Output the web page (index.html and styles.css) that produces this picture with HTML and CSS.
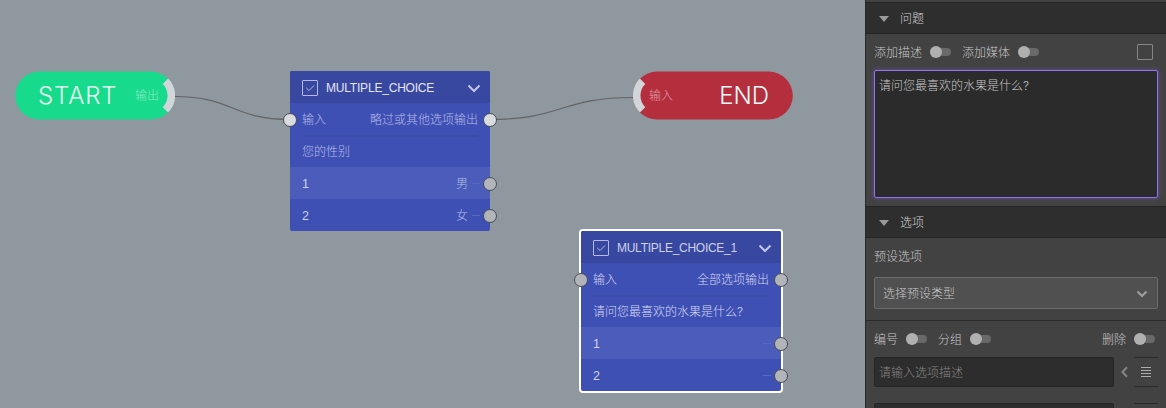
FILE: index.html
```html
<!DOCTYPE html>
<html lang="zh-CN">
<head>
<meta charset="utf-8">
<title>Flow editor</title>
<link rel="stylesheet" href="styles.css">
</head>
<body>
<div class="app">
  <main class="canvas">
    <svg class="wires" width="865" height="408" fill="none" stroke="#626464" stroke-width="1.2">
      <path d="M175 96.5C233 96.5 232 119.5 290 119.5"/>
      <path d="M490 119.5C562 119.5 561 97.5 633 97.5"/>
    </svg>

    <div class="terminal start">
      <svg class="shape" width="160" height="49"><rect x=".2" y=".6" width="159.8" height="48" rx="24" fill="#18da8c"/><path d="M150.4 10.2A20.2 20.2 0 0 1 150.4 38.8" transform="translate(0 .1)" fill="none" stroke="#d2d5da" stroke-width="7.6"/></svg>
      <span class="name">START</span><span class="io">输出</span>
    </div>
    <div class="terminal end">
      <svg class="shape" width="160" height="49"><rect y=".6" width="159.8" height="48" rx="24" fill="#b52e3e"/><path d="M9.6 10.2A20.2 20.2 0 0 0 9.6 38.8" transform="translate(0 .1)" fill="none" stroke="#d2d5da" stroke-width="7.6"/></svg>
      <span class="io">输入</span><span class="name">END</span>
    </div>

    <section class="node first">
      <header class="node-head">
        <svg width="16" height="16" fill="none" stroke="#b4b9de"><rect x=".5" y=".5" width="15" height="15" rx=".5"/><path d="M4.2 7.8l2.8 2.8 5-5.1"/></svg>
        <span class="node-title">MULTIPLE_CHOICE</span>
        <svg class="chev" width="14" height="10" fill="none" stroke="#c3c7e5" stroke-width="2"><path d="M1.5 2.5L7 8 12.5 2.5"/></svg>
      </header>
      <div class="node-row ports"><span>输入</span><span>略过或其他选项输出</span><i class="port in linked"></i><i class="port linked"></i></div>
      <div class="node-row question"><span>您的性别</span></div>
      <div class="node-row option"><b>1</b><span class="value">男</span><i class="dash"></i><i class="port"></i></div>
      <div class="node-row"><b>2</b><span class="value">女</span><i class="dash"></i><i class="port"></i></div>
    </section>

    <section class="node second">
      <header class="node-head">
        <svg width="16" height="16" fill="none" stroke="#b4b9de"><rect x=".5" y=".5" width="15" height="15" rx=".5"/><path d="M4.2 7.8l2.8 2.8 5-5.1"/></svg>
        <span class="node-title">MULTIPLE_CHOICE_1</span>
        <svg class="chev" width="14" height="10" fill="none" stroke="#c3c7e5" stroke-width="2"><path d="M1.5 2.5L7 8 12.5 2.5"/></svg>
      </header>
      <div class="node-row ports"><span>输入</span><span>全部选项输出</span><i class="port in"></i><i class="port"></i></div>
      <div class="node-row question"><span>请问您最喜欢的水果是什么<em>?</em></span></div>
      <div class="node-row option"><b>1</b><i class="dash"></i><i class="port"></i></div>
      <div class="node-row"><b>2</b><i class="dash"></i><i class="port"></i></div>
    </section>
  </main>

  <aside class="panel">
    <h2 class="section-head"><i class="tri"></i>问题</h2>
    <div class="toggles media">
      <span>添加描述</span><i class="switch"></i><span>添加媒体</span><i class="switch"></i><i class="box"></i>
    </div>
    <div class="textarea">请问您最喜欢的水果是什么<em>?</em></div>
    <h2 class="section-head"><i class="tri"></i>选项</h2>
    <div class="preset-label">预设选项</div>
    <div class="select"><span>选择预设类型</span><svg width="12" height="8" fill="none" stroke="#a0a0a0" stroke-width="2"><path d="M1.5 1.5L6 6l4.5-4.5"/></svg></div>
    <div class="toggles list-tools">
      <span>编号</span><i class="switch"></i><span>分组</span><i class="switch"></i><span class="delete">删除</span><i class="switch"></i>
    </div>
    <div class="option-line">
      <div class="field">请输入选项描述</div>
      <svg class="back" width="7" height="12" fill="none" stroke="#858585" stroke-width="2"><path d="M6 1.2L1.5 6 6 10.8"/></svg>
      <div class="handle"><svg width="10" height="10" stroke="#adadad"><path d="M0 .5H10M0 3.5H10M0 6.5H10M0 9.5H10"/></svg></div>
    </div>
    <div class="option-line">
      <div class="field"></div>
      <div class="handle next"></div>
    </div>
  </aside>
</div>
</body>
</html>
```
FILE: styles.css
```css
* { box-sizing: border-box; }
body {
  margin: 0;
  overflow: hidden;
  font: 300 12px/16px "Liberation Sans", "Noto Sans CJK SC", sans-serif;
}
i, em { font-style: normal; }
em { font-family: Inter, sans-serif; font-weight: 300; }
b { font-weight: 400; }
svg { display: block; flex: none; }
.app { display: flex; width: 1166px; height: 408px; overflow: hidden; }

.canvas { position: relative; width: 865px; height: 408px; background: #8f989f; }
.wires { position: absolute; left: 0; top: 0; }

.terminal {
  position: absolute;
  top: 71px;
  width: 160px;
  height: 49px;
  display: flex;
  align-items: center;
  justify-content: space-between;
}
.start { left: 15px; padding: 0 16px 0 23px; }
.end { left: 633px; padding: 0 24px 0 16px; }
.shape { position: absolute; left: 0; top: 0; }
.name, .io { position: relative; }
.io { padding-top: 1px; }
.name { font: 300 24px/28px Inter, sans-serif; color: #f4f8f7; }
.start .name { color: #e4fcf1; letter-spacing: .9px; }
.start .io { color: #8aebc2; }
.end .io { color: #dfa0a8; }

.node { position: absolute; width: 200px; background: #3f50b5; border-radius: 2px; color: #b5bce4; }
.first { left: 290px; top: 71px; }
.second { left: 581px; top: 231px; color: #d5d8f0; box-shadow: 0 0 0 2px #fff; }
.node-head {
  display: flex;
  align-items: center;
  height: 32px;
  padding: 1px 9px 0 12px;
  background: #38479f;
  border-radius: 2px 2px 0 0;
}
.node-title { margin-left: 8px; padding-top: 1px; letter-spacing: -.2px; color: #e4e6f4; }
.second .node-title { letter-spacing: -.27px; color: #ced1ea; }
.chev { margin-left: auto; }
.node-row { position: relative; display: flex; align-items: center; height: 32px; padding: 2px 12px 0; }
.node-row b { color: #d0d4ee; font-size: 12.5px; }
.ports { justify-content: space-between; }
.question::before { content: ""; position: absolute; left: 12px; right: 12px; top: 0; height: 2px; background: #3b4cab; }
.option { background: #4b5cba; }
.value { margin-left: auto; margin-right: 10px; }
.dash { position: absolute; right: 10px; top: 16px; width: 8px; height: 1px; background: #5a69c0; }
.port {
  position: absolute;
  right: -7px;
  top: 10px;
  width: 14px;
  height: 14px;
  border: 1.5px solid #484d52;
  border-radius: 50%;
  background: #b1b5b9;
}
.port.linked { background: #d9dbde; }
.port.in { right: auto; left: -7px; }

.panel { width: 301px; height: 408px; padding-top: 2px; border-left: 1px solid #292929; background: #424242; color: #c6c6c6; overflow: hidden; }
.section-head {
  display: flex;
  align-items: center;
  height: 32px;
  margin: 0;
  padding: 1px 0 0 13px;
  gap: 11px;
  font-size: 12px;
  font-weight: 300;
  color: #d0d0d0;
  background: #2e2e2e;
  border: solid #242424;
  border-width: 1px 0;
}
.tri { border: 5px solid transparent; border-top: 6px solid #999; border-bottom: 0; }
.toggles { display: flex; align-items: center; padding: 0 8px; }
.toggles span { padding-top: 1px; }
.media { height: 36px; }
.switch { position: relative; width: 21px; height: 8px; margin: 0 11px 0 8px; border-radius: 4px; background: #696969; }
.switch::before { content: ""; position: absolute; left: 0; top: -2px; width: 12px; height: 12px; border-radius: 50%; background: #b0b0b0; }
.box { width: 16px; height: 16px; margin: 0 5px 0 auto; border: 1px solid #858585; border-radius: 1px; }
.textarea {
  height: 128px;
  margin: 0 8px 8px;
  padding: 7px 4px;
  border: 1px solid #9373f0;
  border-radius: 2px;
  background: #2b2b2b;
  box-shadow: 0 0 4px #654fa3;
}
.preset-label { height: 39px; padding: 11px 8px 0; }
.select {
  display: flex;
  align-items: center;
  justify-content: space-between;
  height: 32px;
  margin: 0 8px 11px;
  padding: 1px 9px 0 8px;
  border: 1px solid #6c6c6c;
  border-radius: 2px;
  background: #505050;
}
.list-tools { height: 37px; border-top: 1px solid #2b2b2b; }
.list-tools .switch:last-child { margin-right: 3px; }
.delete { margin-left: auto; }
.option-line { display: flex; align-items: center; height: 30px; margin: 0 8px 16px; }
.field { width: 240px; height: 30px; padding: 7px 4px; border: 1px solid #252525; border-radius: 2px; background: #2d2d2d; color: #858585; }
.back { margin-left: 7px; }
.handle { display: flex; align-items: center; justify-content: center; width: 24px; height: 30px; margin-left: auto; border: solid #2a2a2a; border-width: 1px 0; }
```
